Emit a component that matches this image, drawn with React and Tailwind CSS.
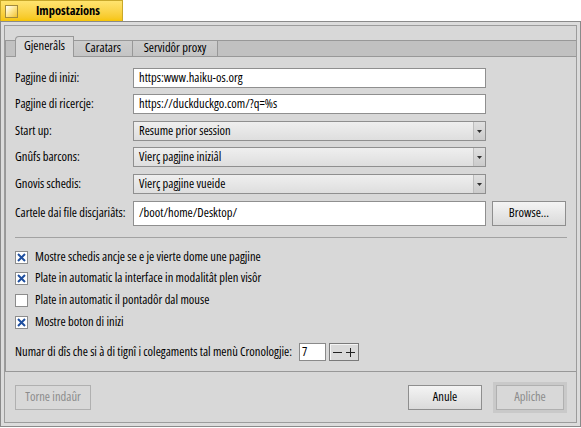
import React from 'react';

const LINE = 'border-[#989898]';

function TextField({ value, tall }) {
  return (
    <div className={`flex w-[353px] items-center border border-[#8f8f8f] bg-white pl-[5px] ${tall ? 'h-[25px]' : 'h-[20px]'}`}>
      {value}
    </div>
  );
}

function MenuField({ value }) {
  return (
    <div className="flex h-[20px] w-[353px] border border-[#8f8f8f] bg-gradient-to-b from-[#efefef] to-[#dedede]">
      <div className="flex flex-1 items-center pl-[5px]">{value}</div>
      <div className="flex w-[12px] items-center justify-center border-l border-[#bdbdbd] bg-gradient-to-b from-[#e0e0e0] to-[#cbcbcb]">
        <svg width="5" height="3" viewBox="0 0 5 3">
          <path d="M0 0h5L2.5 3z" fill="#303030" />
        </svg>
      </div>
    </div>
  );
}

function Row({ label, children, className = '' }) {
  return (
    <div className={`flex items-center ${className}`}>
      <div className="w-[118px]">{label}</div>
      {children}
    </div>
  );
}

function Check({ checked, label, className = '' }) {
  return (
    <div className={`flex h-[13px] items-center ${className}`}>
      <div className="flex h-[13px] w-[13px] items-center justify-center border border-[#8c8c8c] bg-white">
        {checked && (
          <svg width="9" height="9" viewBox="0 0 9 9">
            <path d="M1 1l7 7M8 1L1 8" stroke="#1f4f9f" strokeWidth="2" />
          </svg>
        )}
      </div>
      <span className="ml-[7px]">{label}</span>
    </div>
  );
}

function Button({ children, disabled, className = '' }) {
  return (
    <div
      className={`flex h-[25px] items-center justify-center border ${
        disabled
          ? 'border-[#b0b0b0] bg-[#d8d8d8] text-[#8c8c8c]'
          : 'border-[#8e8e8e] bg-gradient-to-b from-[#f4f4f4] to-[#dadada] text-black'
      } ${className}`}
    >
      {children}
    </div>
  );
}

export default function App() {
  return (
    <div className="h-[428px] w-[581px] overflow-hidden bg-white font-['Open_Sans',sans-serif] text-[12.5px] leading-none text-black [font-stretch:87.5%]">
      {/* title tab */}
      <div className="flex h-[21px] w-[123px] items-center border-x border-t border-[#c9a82a] bg-gradient-to-b from-[#ffe46e] to-[#f6c500]">
        <div className="ml-[4px] h-[13px] w-[13px] border border-[#a28a3c] bg-gradient-to-br from-[#ffffff] via-[#fde58a] to-[#f1c21a]" />
        <span className="ml-[18px] font-bold">Impostazions</span>
      </div>

      {/* window frame */}
      <div className="h-[406px] w-[581px] border border-[#8a8a8a] bg-[#dcdcdc] p-[3px]">
        <div className="h-full w-full border border-[#9c9c9c] bg-[#d8d8d8]">
          {/* tab view */}
          <div className="pt-[10px]">
            <div className="flex h-[20px] items-end">
              <div className={`h-[16px] w-[10px] border-l border-t ${LINE} bg-[#c1c1c1]`} />
              <div className={`relative z-10 mb-[-1px] flex h-[21px] w-[59px] items-center justify-center rounded-tl-[4px] border-x border-t ${LINE} bg-[#d8d8d8] pb-[2px]`}>
                Gjenerâls
              </div>
              <div className={`flex h-[16px] w-[59px] items-center justify-center border-r border-t ${LINE} bg-gradient-to-b from-[#cdcdcd] to-[#c4c4c4]`}>
                Caratars
              </div>
              <div className={`flex h-[16px] w-[85px] items-center justify-center border-r border-t ${LINE} bg-gradient-to-b from-[#cdcdcd] to-[#c4c4c4]`}>
                Servidôr proxy
              </div>
              <div className={`h-[16px] flex-1 border-t ${LINE} bg-[#c1c1c1]`} />
            </div>

            <div className={`h-[316px] border-y border-l ${LINE} pl-[9px] pr-[9px] pt-[11px]`}>
              <Row label="Pagjine di inizi:">
                <TextField value="https:www.haiku-os.org" />
              </Row>
              <Row label="Pagjine di ricercje:" className="mt-[6px]">
                <TextField value="https://duckduckgo.com/?q=%s" />
              </Row>
              <Row label="Start up:" className="mt-[7px]">
                <MenuField value="Resume prior session" />
              </Row>
              <Row label="Gnûfs barcons:" className="mt-[6px]">
                <MenuField value="Vierç pagjine iniziâl" />
              </Row>
              <Row label="Gnovis schedis:" className="mt-[7px]">
                <MenuField value="Vierç pagjine vueide" />
              </Row>
              <Row label="Cartele dai file discjariâts:" className="mt-[7px]">
                <TextField value="/boot/home/Desktop/" tall />
                <Button className="ml-[6px] w-[74px]">Browse...</Button>
              </Row>

              <div className="mt-[11px] h-px bg-[#a2a2a2]" />

              <Check checked label="Mostre schedis ancje se e je vierte dome une pagjine" className="mt-[13px]" />
              <Check checked label="Plate in automatic la interface in modalitât plen visôr" className="mt-[8px]" />
              <Check label="Plate in automatic il pontadôr dal mouse" className="mt-[9px]" />
              <Check checked label="Mostre boton di inizi" className="mt-[9px]" />

              <div className="mt-[14px] flex items-center">
                <span>Numar di dîs che si à di tignî i colegaments tal menù Cronologjie:</span>
                <div className="ml-[7px] flex h-[18px] w-[27px] items-center border border-[#8a8a8a] bg-white pl-[2px]">7</div>
                <div className="ml-[3px] flex h-[18px] w-[30px] items-center justify-center border border-[#7a7a7a] bg-[#dadada] shadow-[inset_1px_1px_0_#f4f4f4]">
                  <svg width="22" height="9" viewBox="0 0 22 9">
                    <path d="M0 4.5h9M13 4.5h9M17.5 0v9" stroke="#222" strokeWidth="1" />
                  </svg>
                </div>
              </div>
            </div>
          </div>

          {/* bottom buttons */}
          <div className="flex h-[50px] items-center pl-[10px] pr-[9px]">
            <Button disabled className="w-[76px]">Torne indaûr</Button>
            <Button className="ml-auto w-[74px]">Anule</Button>
            <div className="ml-[11px] flex h-[31px] w-[74px] items-center justify-center bg-[#c9c9c9]">
              <Button disabled className="w-[68px]">Apliche</Button>
            </div>
          </div>
        </div>
      </div>
    </div>
  );
}
